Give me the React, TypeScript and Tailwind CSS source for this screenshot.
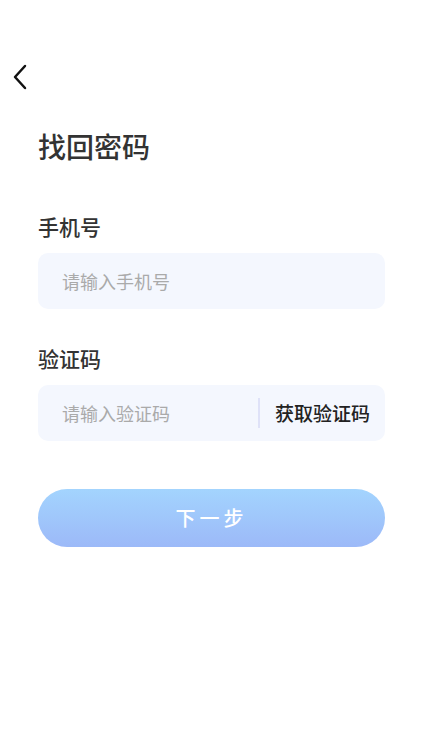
const font = { fontFamily: '"Noto Sans CJK SC", "Noto Sans", sans-serif' };

export default function App() {
    return (
        <div className="w-[423px] h-[752px] bg-white" style={font}>
            {/* Back */}
            <div className="pt-[64px] pl-[12px]">
                <svg width="16" height="26" viewBox="0 0 16 26" fill="none">
                    <path d="M13 2 L3 13 L13 24" stroke="#111" strokeWidth="2.5" strokeLinecap="round" strokeLinejoin="round" />
                </svg>
            </div>

            <div className="px-[38px]">
                {/* Title */}
                <h1 className="mt-[38px] text-[28px] leading-[36px] font-medium text-[#333]">找回密码</h1>

                {/* Phone */}
                <div className="mt-[48px] text-[21px] leading-[28px] font-medium text-[#333]">手机号</div>
                <div className="mt-[13px] h-[56px] rounded-[10px] bg-[#f4f7fe] flex items-center px-[24px]">
                    <span className="text-[18px] text-[#aaaaaa]">请输入手机号</span>
                </div>

                {/* Code */}
                <div className="mt-[35px] text-[21px] leading-[28px] font-medium text-[#333]">验证码</div>
                <div className="mt-[13px] h-[56px] rounded-[10px] bg-[#f4f7fe] flex items-center pl-[24px] pr-[15px]">
                    <span className="flex-1 text-[18px] text-[#aaaaaa]">请输入验证码</span>
                    <div className="w-[2px] h-[30px] bg-[#dfe2f8] mr-[15px]" />
                    <span className="text-[19px] font-medium text-[#222]">获取验证码</span>
                </div>

                {/* Next */}
                <button className="mt-[48px] w-full h-[58px] rounded-full bg-gradient-to-b from-[#a3d4fe] to-[#9cb9f8] text-white text-[20px] font-medium tracking-[4px]">
                    下一步
                </button>
            </div>
        </div>
    );
}
